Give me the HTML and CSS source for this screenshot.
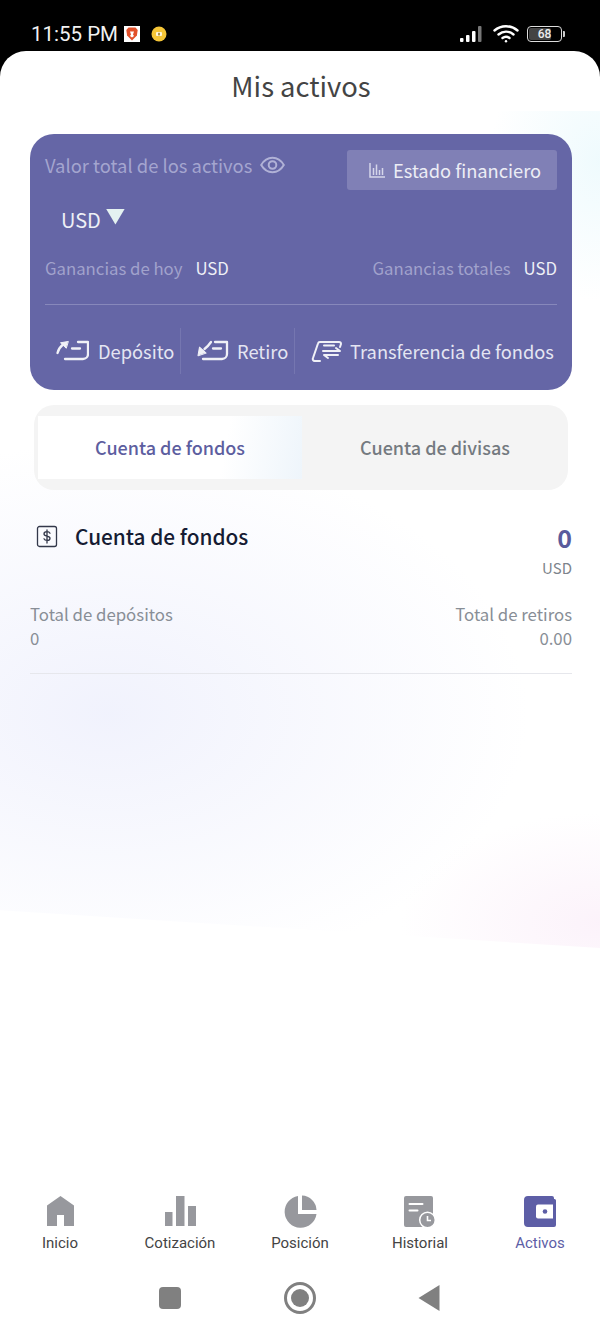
FILE: index.html
```html
<!DOCTYPE html>
<html lang="es">
<head>
    <meta charset="UTF-8">
    <meta name="viewport" content="width=device-width, initial-scale=1.0">
    <title>Mis activos</title>
    <link rel="stylesheet" href="styles.css">
</head>
<body>
    <div class="status-bar">
        <div class="status-left">
            <span class="status-time">11:55 PM</span>
            <svg class="brave-icon" width="16" height="16" viewBox="0 0 16 16">
                <rect width="16" height="16" fill="#fff"/>
                <path d="M4.500 1.500h7l2.200 2.500-.8 5.500L8 14.500 3.100 9.500 2.300 4z" fill="#e2502a"/>
                <path d="M6 5.500h4L9 8.500l1 1.500-2 1.500L6 10l1-1.500z" fill="#fff"/>
            </svg>
            <svg class="key-icon" width="16" height="16" viewBox="0 0 16 16">
                <circle cx="8" cy="8" r="7.500" fill="#f6c637"/>
                <rect x="5" y="6" width="6" height="4" rx="1" fill="#fff6d8"/>
                <rect x="7.300" y="6.800" width="1.400" height="2.600" fill="#8a6a10"/>
            </svg>
        </div>
        <div class="status-right">
            <svg width="25" height="17" viewBox="0 0 25 17">
                <rect x="0" y="13" width="3.500" height="4" rx="1" fill="#fff"/>
                <rect x="6" y="10" width="3.500" height="7" rx="1" fill="#fff"/>
                <rect x="12" y="6" width="3.500" height="11" rx="1" fill="#fff"/>
                <rect x="18" y="1" width="3.500" height="16" rx="1" fill="#777"/>
            </svg>
            <svg class="wifi-icon" width="26" height="19" viewBox="0 0 26 19" fill="none" stroke="#fff" stroke-width="2.400" stroke-linecap="round">
                <path d="M1.500 6.500C8 .8 18 .8 24.500 6.500"/>
                <path d="M5.500 10.500c4.500-3.800 10.500-3.800 15 0"/>
                <path d="M9.500 14c2-1.500 5-1.500 7 0"/>
                <circle cx="13" cy="17.300" r="1.200" fill="#fff" stroke="none"/>
            </svg>
            <div class="battery">
                <div class="battery-body"><span class="battery-fill"></span><span class="battery-num">68</span></div>
                <span class="battery-tip"></span>
            </div>
        </div>
    </div>

    <div class="sheet">
        <div class="tint"></div>

        <main class="content">
            <h1 class="page-title">Mis activos</h1>

            <section class="asset-card">
                <div class="card-top">
                    <div class="total-label">
                        <span>Valor total de los activos</span>
                        <svg width="25" height="18" viewBox="0 0 25 18" fill="none" stroke="#b0b1d6" stroke-width="2">
                            <path d="M1.200 9C4 4.200 8 1.800 12.500 1.800S21 4.200 23.800 9C21 13.800 17 16.200 12.500 16.200S4 13.800 1.200 9z"/>
                            <circle cx="12.500" cy="9" r="3.800"/>
                        </svg>
                    </div>
                    <div class="statement-btn">
                        <svg width="16" height="15" viewBox="0 0 16 15" fill="none" stroke="#d5d6ea" stroke-width="1.500">
                            <path d="M1 0v14h15"/>
                            <path d="M4.500 12V5M7.500 12V1.500M10.500 12V7M13.500 12V5"/>
                        </svg>
                        <span>Estado financiero</span>
                    </div>
                </div>

                <div class="currency">
                    <span>USD</span>
                    <span class="currency-arrow"></span>
                </div>

                <div class="earnings">
                    <div><span class="earn-label">Ganancias de hoy</span><span class="earn-value">USD</span></div>
                    <div><span class="earn-label">Ganancias totales</span><span class="earn-value">USD</span></div>
                </div>

                <div class="actions">
                    <div class="action action-deposit">
                        <svg width="33" height="22" viewBox="0 0 33 22" fill="none" stroke="#f0f1f7" stroke-width="2.300" stroke-linecap="round" stroke-linejoin="round">
                            <path d="M22 2h10v12a5 5 0 0 1-5 5H9"/>
                            <path d="M16 8.500h8"/>
                            <path d="M1.500 13C2.500 9 4.500 6.500 7 4.500"/>
                            <path d="M12 1.500 4.500 2.800 10 8z" fill="#f0f1f7" stroke-width="1"/>
                        </svg>
                        <span>Depósito</span>
                    </div>
                    <div class="action action-withdraw">
                        <svg width="33" height="22" viewBox="0 0 33 22" fill="none" stroke="#f0f1f7" stroke-width="2.300" stroke-linecap="round" stroke-linejoin="round">
                            <path d="M19 2h12v12a5 5 0 0 1-5 5H7"/>
                            <path d="M17 8.500h8"/>
                            <path d="M15 2C13 5 11 7 8.500 9"/>
                            <path d="M2 15.500 3.500 7 10 12.800z" fill="#f0f1f7" stroke-width="1"/>
                        </svg>
                        <span>Retiro</span>
                    </div>
                    <div class="action action-transfer">
                        <svg width="33" height="23" viewBox="0 0 33 23" fill="none" stroke="#f0f1f7" stroke-width="2" stroke-linecap="round" stroke-linejoin="round">
                            <path d="M30 7l1-3a2 2 0 0 0-2-2H10a2 2 0 0 0-2 1.500L3 18a2 2 0 0 0 2 3h5"/>
                            <path d="M14 5.500h10"/>
                            <path d="M13 11h17l-4-3"/>
                            <path d="M28 15H14l4 3"/>
                        </svg>
                        <span>Transferencia de fondos</span>
                    </div>
                </div>
            </section>

            <div class="tabs">
                <div class="tab tab-active">Cuenta de fondos</div>
                <div class="tab">Cuenta de divisas</div>
            </div>

            <section class="account">
                <div class="account-head">
                    <div class="account-name">
                        <svg width="22" height="23" viewBox="0 0 22 23" fill="none" stroke="#33384a" stroke-width="1.300" stroke-linecap="round">
                            <rect x="1.500" y="1.500" width="19" height="20" rx="2"/>
                            <path d="M14 8.200c-.5-1-1.500-1.500-3-1.500-1.800 0-3 .8-3 2.200 0 3 6 1.300 6 4.300 0 1.400-1.300 2.200-3 2.200-1.500 0-2.600-.6-3-1.600M11 5v13"/>
                        </svg>
                        <span>Cuenta de fondos</span>
                    </div>
                    <div class="account-total">
                        <div class="account-amount">0</div>
                        <div class="account-unit">USD</div>
                    </div>
                </div>
                <div class="account-stats">
                    <div>
                        <div>Total de depósitos</div>
                        <div>0</div>
                    </div>
                    <div class="stat-right">
                        <div>Total de retiros</div>
                        <div>0.00</div>
                    </div>
                </div>
            </section>
        </main>

        <nav class="tab-bar">
            <div class="nav-item">
                <svg width="27" height="33" viewBox="0 0 27 33"><path d="M13.500 1 27 10.500V31H17V20h-7v11H0V10.500z" fill="#97989d"/></svg>
                <span>Inicio</span>
            </div>
            <div class="nav-item">
                <svg width="31" height="33" viewBox="0 0 31 33" fill="#97989d">
                    <rect x="0" y="17" width="7.500" height="14"/>
                    <rect x="11" y="1" width="8.500" height="30"/>
                    <rect x="23" y="11" width="8" height="20"/>
                </svg>
                <span>Cotización</span>
            </div>
            <div class="nav-item">
                <svg width="33" height="33" viewBox="0 0 33 33" fill="#97989d">
                    <path d="M14 1v18h18.500A16 16 0 1 1 14 1z"/>
                    <path d="M18 .5A15 15 0 0 1 32.500 15H18z"/>
                </svg>
                <span>Posición</span>
            </div>
            <div class="nav-item">
                <svg width="32" height="33" viewBox="0 0 32 33">
                    <rect x="0" y="1" width="29" height="31" rx="2" fill="#97989d"/>
                    <path d="M5.500 9h13M5.500 15.500h8" stroke="#fff" stroke-width="2" stroke-linecap="round"/>
                    <circle cx="23.500" cy="25" r="7.800" fill="#97989d" stroke="#fff" stroke-width="1.500"/>
                    <path d="M23.500 21v4.500h3.500" fill="none" stroke="#fff" stroke-width="1.600"/>
                </svg>
                <span>Historial</span>
            </div>
            <div class="nav-item nav-item-active">
                <svg width="32" height="33" viewBox="0 0 32 33">
                    <path d="M4 1h24a2 2 0 0 1 2 2v1h.500a1.500 1.500 0 0 1 1.500 1.500V30a2 2 0 0 1-2 2H4a4 4 0 0 1-4-4V5a4 4 0 0 1 4-4z" fill="#5d5ea6"/>
                    <path d="M29 9.500H14a2 2 0 0 0-2 2v10a2 2 0 0 0 2 2h15z" fill="#fff"/>
                    <circle cx="21" cy="16.500" r="2.300" fill="#5d5ea6"/>
                </svg>
                <span>Activos</span>
            </div>
        </nav>

        <div class="system-nav">
            <span class="sys-square"></span>
            <span class="sys-home"><span class="sys-home-dot"></span></span>
            <svg width="22" height="26" viewBox="0 0 22 26"><path d="M21.500 0v26L.5 13z" fill="#808080"/></svg>
        </div>
    </div>
</body>
</html>
```

FILE: styles.css
```css
* {
    box-sizing: border-box;
}

html, body {
    height: 100%;
}

body {
    margin: 0;
    width: 600px;
    height: 1333px;
    overflow: hidden;
    background-color: #000;
    display: flex;
    flex-direction: column;
    font-family: "Noto Sans CJK SC", "Noto Sans", sans-serif;
}

/* status bar */
.status-bar {
    height: 51px;
    flex: none;
    padding: 23px 35px 0 31px;
    display: flex;
    justify-content: space-between;
    align-items: flex-start;
    color: #f2f2f2;
    font-family: Roboto, sans-serif;
}

.status-left {
    display: flex;
    align-items: center;
    height: 22px;
}

.status-time {
    font-size: 20.500px;
    line-height: 22px;
}

.brave-icon {
    margin-left: 6px;
}

.key-icon {
    margin-left: 11px;
}

.status-right {
    display: flex;
    align-items: center;
    margin-top: 1px;
}

.wifi-icon {
    margin-left: 8px;
}

.battery {
    display: flex;
    align-items: center;
    margin-left: 8px;
}

.battery-body {
    position: relative;
    width: 35px;
    height: 16px;
    border: 1.500px solid #ddd;
    border-radius: 4px;
    display: flex;
    align-items: center;
    justify-content: center;
    overflow: hidden;
}

.battery-fill {
    position: absolute;
    left: 1px;
    top: 1px;
    bottom: 1px;
    width: 66%;
    background-color: #444;
    border-radius: 2px;
}

.battery-num {
    position: relative;
    font-size: 12px;
    font-weight: 500;
    color: #eee;
}

.battery-tip {
    width: 2px;
    height: 6px;
    margin-left: 1px;
    background-color: #ccc;
    border-radius: 0 1px 1px 0;
}

/* white sheet */
.sheet {
    position: relative;
    flex: 1;
    min-height: 0;
    background-color: #fff;
    border-radius: 26px 26px 0 0;
    display: flex;
    flex-direction: column;
    overflow: hidden;
}

.tint {
    position: absolute;
    left: 0;
    top: 60px;
    width: 600px;
    height: 837px;
    clip-path: polygon(0 0, 100% 0, 100% 100%, 0 95.500%);
    background:
        radial-gradient(ellipse 110px 140px at 100% 6%, rgba(226, 247, 252, 0.55), rgba(226, 247, 252, 0)),
        radial-gradient(ellipse 200px 110px at 100% 97%, rgba(250, 236, 248, 0.65), rgba(250, 236, 248, 0)),
        radial-gradient(ellipse 420px 270px at 18% 72%, rgba(236, 238, 252, 0.75), rgba(236, 238, 252, 0));
}

.content {
    position: relative;
    flex: 1;
    min-height: 0;
    padding: 0 28px 0 30px;
}

.page-title {
    margin: 0;
    height: 83px;
    padding-top: 13px;
    font-size: 27.400px;
    line-height: 42px;
    font-weight: 400;
    text-align: center;
    color: #444;
}

/* purple card */
.asset-card {
    height: 256px;
    padding: 15px 15px 0 15px;
    border-radius: 24px;
    background-color: #6566a6;
    color: #eef0f6;
}

.card-top {
    display: flex;
    justify-content: space-between;
    align-items: flex-start;
}

.total-label {
    display: flex;
    align-items: center;
    gap: 8px;
    height: 32px;
    font-size: 18.400px;
    color: #a4a5cf;
}

.statement-btn {
    width: 210px;
    height: 40px;
    margin-top: 1px;
    padding-left: 22px;
    display: flex;
    align-items: center;
    gap: 8px;
    border-radius: 3px;
    background-color: #8080b6;
    font-size: 18.300px;
    color: #eceDf5;
}

.currency {
    margin-top: 14px;
    padding-left: 16px;
    height: 30px;
    display: flex;
    align-items: center;
    gap: 5px;
    font-size: 20px;
}

.currency-arrow {
    width: 19px;
    height: 16px;
    margin-top: -5px;
    background-color: #e4f2f1;
    clip-path: polygon(0 0, 100% 0, 50% 100%);
}

.earnings {
    margin-top: 21px;
    padding-bottom: 23px;
    display: flex;
    justify-content: space-between;
    border-bottom: 1.500px solid #8788bb;
    font-size: 16.750px;
    line-height: 26px;
}

.earn-label {
    color: #a1a2cc;
    margin-right: 13px;
}

.earn-value {
    color: #eef0f6;
}

.actions {
    margin: 23px -15px 0 -15px;
    height: 46px;
    display: flex;
    font-size: 18.300px;
    color: #e4e5f2;
}

.action {
    display: flex;
    align-items: center;
    gap: 9px;
    height: 46px;
    padding-left: 26px;
    border-right: 1px solid #7576b0;
}

.action-deposit {
    width: 151px;
}

.action-withdraw {
    width: 114px;
    padding-left: 15px;
    gap: 8px;
}

.action-transfer {
    padding-left: 15px;
    gap: 7px;
    border-right: none;
}

/* tabs */
.tabs {
    margin: 15px 4px 0 4px;
    height: 85px;
    padding: 11px 0 11px 4px;
    display: flex;
    border-radius: 20px;
    background-color: #f4f4f4;
    font-size: 18px;
    font-weight: 500;
    color: #747a80;
}

.tab {
    flex: 1;
    padding-bottom: 2px;
    display: flex;
    align-items: center;
    justify-content: center;
}

.tab-active {
    flex: none;
    width: 264px;
    background: linear-gradient(100deg, #fff 70%, #eef5fb 100%);
    color: #5d5e9f;
}

/* account */
.account-head {
    margin-top: 25px;
    display: flex;
    justify-content: space-between;
    align-items: flex-start;
}

.account-name {
    display: flex;
    align-items: center;
    gap: 17px;
    height: 42px;
    padding-left: 6px;
    font-size: 20.800px;
    font-weight: 500;
    color: #161c33;
}

.account-total {
    text-align: right;
}

.account-amount {
    font-size: 25px;
    line-height: 44px;
    font-weight: 700;
    color: #5a5b9c;
}

.account-unit {
    margin-top: -3px;
    font-size: 15px;
    line-height: 24px;
    color: #7d848c;
}

.account-stats {
    margin-top: 22px;
    padding-bottom: 23px;
    display: flex;
    justify-content: space-between;
    border-bottom: 1px solid #e6e7ec;
    font-size: 16.800px;
    line-height: 24px;
    color: #888e96;
}

.stat-right {
    text-align: right;
}

/* bottom nav */
.tab-bar {
    position: relative;
    flex: none;
    display: flex;
    height: 83px;
    align-items: flex-start;
}

.nav-item {
    width: 120px;
    display: flex;
    flex-direction: column;
    align-items: center;
    font-family: Roboto, sans-serif;
    font-size: 15px;
    color: #444;
}

.nav-item span {
    margin-top: 6px;
    line-height: 18px;
}

.nav-item-active {
    color: #5d5ea6;
}

.system-nav {
    flex: none;
    height: 55px;
    padding-left: 159px;
    display: flex;
    align-items: flex-start;
}

.sys-square {
    width: 22px;
    height: 22px;
    margin-top: 9px;
    border-radius: 4px;
    background-color: #808080;
}

.sys-home {
    width: 32px;
    height: 32px;
    margin: 4px 0 0 103px;
    border: 3px solid #808080;
    border-radius: 50%;
    display: flex;
    align-items: center;
    justify-content: center;
}

.sys-home-dot {
    width: 18px;
    height: 18px;
    border-radius: 50%;
    background-color: #808080;
}

.system-nav svg {
    margin: 7px 0 0 102px;
}
```
